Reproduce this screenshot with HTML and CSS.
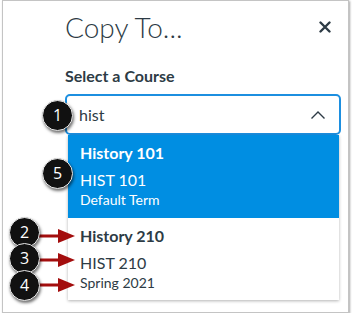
FILE: index.html
```html
<!DOCTYPE html>
<html lang="en">
<head>
  <meta charset="UTF-8">
  <meta name="viewport" content="width=device-width, initial-scale=1.0">
  <title>Copy To</title>
  <link rel="stylesheet" href="styles.css">
</head>
<body>
  <div class="frame">
    <div class="header">
      <h1>Copy To...</h1>
      <button class="close-btn" aria-label="Close">
        <svg width="12" height="12" viewBox="0 0 12 12">
          <path d="M1.5 1.5 L10.5 10.5 M10.5 1.5 L1.5 10.5" stroke="#2d3b45" stroke-width="2.4" stroke-linecap="round"/>
        </svg>
      </button>
    </div>

    <label class="field-label" for="course">Select a Course</label>
    <div class="select-box">
      <input type="text" id="course" value="hist">
      <svg class="chevron" width="16" height="10" viewBox="0 0 16 10">
        <path d="M1.5 8.5 L8 2 L14.5 8.5" fill="none" stroke="#2d3b45" stroke-width="1.4"/>
      </svg>
    </div>

    <ul class="options">
      <li class="option active">
        <span class="opt-name">History 101</span>
        <span class="opt-code">HIST 101</span>
        <span class="opt-term">Default Term</span>
      </li>
      <li class="option">
        <span class="opt-name">History 210</span>
        <span class="opt-code">HIST 210</span>
        <span class="opt-term">Spring 2021</span>
      </li>
    </ul>

    <!-- Callout markers -->
    <div class="marker m1">1</div>
    <div class="marker m5">5</div>

    <svg class="arrows" width="80" height="80" viewBox="0 0 80 80">
      <g fill="#a30d0d">
        <rect x="36" y="13.5" width="24" height="3"/>
        <polygon points="58,8 75,15 58,22"/>
        <rect x="36" y="37.5" width="24" height="3"/>
        <polygon points="58,32 75,39 58,46"/>
        <rect x="36" y="62.5" width="24" height="3"/>
        <polygon points="58,57 75,64 58,71"/>
      </g>
    </svg>
    <div class="marker m2">2</div>
    <div class="marker m3">3</div>
    <div class="marker m4">4</div>
  </div>
</body>
</html>
```

FILE: styles.css
```css
body {
  margin: 0;
  background-color: #fff;
  font-family: 'Lato', 'Open Sans', sans-serif;
  color: #2d3b45;
}

.frame {
  position: relative;
  box-sizing: border-box;
  width: 347px;
  height: 313px;
  margin-left: 2px;
  padding: 9px 7px 0 62px;
  border: 1px solid #c4c4c4;
  box-shadow: 1px 1px 2px rgba(0, 0, 0, 0.35);
}

.header {
  display: flex;
  justify-content: space-between;
  align-items: center;
  padding-right: 10px;
}

h1 {
  margin: 0;
  font-size: 28px;
  font-weight: 300;
  line-height: 34px;
  color: #2d3b45;
}

.close-btn {
  border: none;
  background: none;
  padding: 0;
  width: 12px;
  height: 12px;
  display: flex;
  margin-top: -1px;
}

.field-label {
  display: block;
  margin-top: 22px;
  font-size: 16px;
  font-weight: 700;
  line-height: 20px;
}

.select-box {
  box-sizing: border-box;
  margin-top: 8px;
  height: 41px;
  display: flex;
  align-items: center;
  padding: 0 13px 0 12px;
  border: 2px solid #1c8fe0;
  border-radius: 5px;
}

.select-box input {
  flex: 1;
  border: none;
  outline: none;
  padding: 0;
  font-family: inherit;
  font-size: 16px;
  color: #2d3b45;
  background: transparent;
}

.chevron {
  display: block;
}

.options {
  list-style: none;
  margin: 0 2px 0 3px;
  padding: 0;
  background-color: #fff;
  box-shadow: 0 1px 3px rgba(0, 0, 0, 0.3);
}

.option {
  display: flex;
  flex-direction: column;
  height: 82px;
  padding: 8px 0 0 12px;
  box-sizing: border-box;
}

.option.active {
  height: 83px;
  background-color: #008ee2;
  color: #fff;
}

.opt-name {
  font-size: 16px;
  font-weight: 700;
  line-height: 20px;
}

.opt-code {
  margin-top: 6px;
  font-size: 16px;
  line-height: 22px;
}

.opt-term {
  font-size: 14px;
  line-height: 18px;
}

/* Callouts */
.marker {
  position: absolute;
  box-sizing: border-box;
  width: 31px;
  height: 31px;
  border-radius: 50%;
  background-color: #111;
  border: 1px solid #e8e8e8;
  box-shadow: 1px 2px 3px rgba(0, 0, 0, 0.55);
  color: #fff;
  font-family: 'Open Sans', sans-serif;
  font-size: 16px;
  line-height: 29px;
  text-align: center;
}

.m1 { left: 39px; top: 99px; }
.m5 { left: 39px; top: 157px; }
.m2 { left: 6px; top: 216px; }
.m3 { left: 6px; top: 242px; }
.m4 { left: 6px; top: 269px; }

.arrows {
  position: absolute;
  left: -3px;
  top: 220px;
}
```
